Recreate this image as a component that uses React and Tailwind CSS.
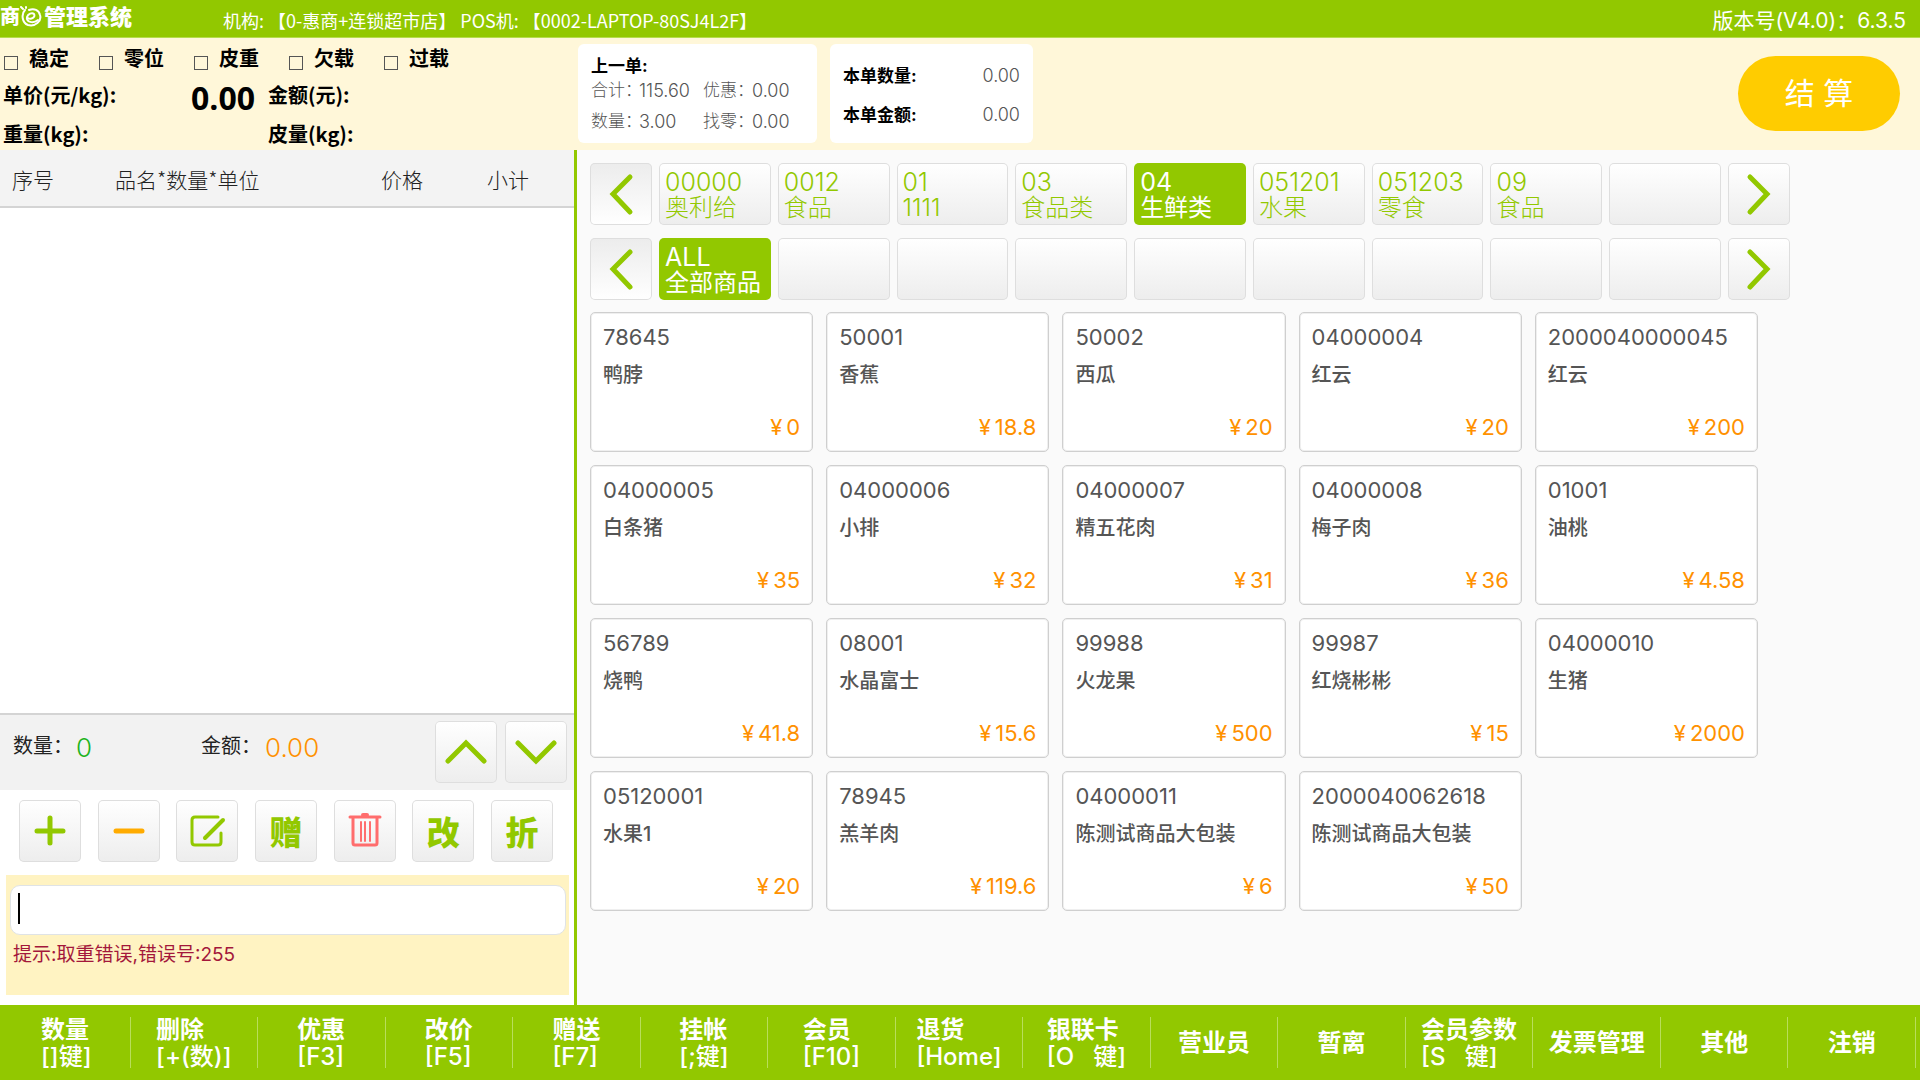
import React, { useState } from 'react'

const SCALE_FLAGS = ['稳定', '零位', '皮重', '欠载', '过载']

const CATEGORIES = [
  { code: '00000', name: '奥利给' },
  { code: '0012', name: '食品' },
  { code: '01', name: '1111' },
  { code: '03', name: '食品类' },
  { code: '04', name: '生鲜类' },
  { code: '051201', name: '水果' },
  { code: '051203', name: '零食' },
  { code: '09', name: '食品' },
  null,
]

const SUB_CATEGORIES = [{ code: 'ALL', name: '全部商品' }, null, null, null, null, null, null, null, null]

const PRODUCTS = [
  ['78645', '鸭脖', '0'],
  ['50001', '香蕉', '18.8'],
  ['50002', '西瓜', '20'],
  ['04000004', '红云', '20'],
  ['2000040000045', '红云', '200'],
  ['04000005', '白条猪', '35'],
  ['04000006', '小排', '32'],
  ['04000007', '精五花肉', '31'],
  ['04000008', '梅子肉', '36'],
  ['01001', '油桃', '4.58'],
  ['56789', '烧鸭', '41.8'],
  ['08001', '水晶富士', '15.6'],
  ['99988', '火龙果', '500'],
  ['99987', '红烧彬彬', '15'],
  ['04000010', '生猪', '2000'],
  ['05120001', '水果1', '20'],
  ['78945', '羔羊肉', '119.6'],
  ['04000011', '陈测试商品大包装', '6'],
  ['2000040062618', '陈测试商品大包装', '50'],
]

const FUNCTIONS = [
  ['数量', '[]键]'],
  ['删除', '[+(数)]'],
  ['优惠', '[F3]'],
  ['改价', '[F5]'],
  ['赠送', '[F7]'],
  ['挂帐', '[;键]'],
  ['会员', '[F10]'],
  ['退货', '[Home]'],
  ['银联卡', '[O   键]'],
  ['营业员'],
  ['暂离'],
  ['会员参数', '[S   键]'],
  ['发票管理'],
  ['其他'],
  ['注销'],
]

const CHEVRONS = {
  left: 'M40 14 L23 31 L40 49',
  right: 'M22 14 L39 31 L22 49',
  up: 'M13 40 L31 22 L49 40',
  down: 'M13 22 L31 40 L49 22',
}

function Chevron({ dir }) {
  return (
    <svg viewBox="0 0 62 62" className="size-full" fill="none" stroke="#92c800" strokeWidth="5" strokeLinecap="round">
      <path d={CHEVRONS[dir]} />
    </svg>
  )
}

function SquareButton({ label, children, dark = false }) {
  const fill = dark ? 'from-[#ececec] to-white' : 'from-white to-[#ededed]'
  return (
    <button
      type="button"
      aria-label={label}
      className={`flex size-[62px] shrink-0 items-center justify-center rounded-[5px] bg-linear-to-b shadow-[inset_0_0_0_1px_#dedede] ${fill}`}
    >
      {children}
    </button>
  )
}

function CategoryRow({ items, active, onPick }) {
  return (
    <div className="flex gap-[7px]">
      <SquareButton label="上一页" dark><Chevron dir="left" /></SquareButton>
      {items.map((item, i) => (
        <button
          key={i}
          type="button"
          onClick={() => item && onPick(i)}
          className={`h-[62px] min-w-0 flex-1 rounded-[5px] pt-[2px] pl-[6px] text-left leading-[25px] whitespace-nowrap ${
            i === active
              ? 'bg-[#92c800] font-normal text-white'
              : 'bg-linear-to-b from-white to-[#ededed] font-light text-[#92c800] shadow-[inset_0_0_0_1px_#dedede]'
          }`}
        >
          {item && (
            <>
              <span className="block text-[25px]">{item.code}</span>
              <span className="block text-[24px]">{item.name}</span>
            </>
          )}
        </button>
      ))}
      <SquareButton label="下一页"><Chevron dir="right" /></SquareButton>
    </div>
  )
}

function Logo() {
  return (
    <h1 className="flex w-[223px] items-center text-[22px] leading-[30px] font-black text-white">
      <span className="text-[20px]">商</span>
      <svg viewBox="0 0 22 22" className="size-[22px]" fill="none" stroke="#fff" strokeLinecap="round" aria-label="e">
        <path d="M8 12 C11 14 16 11 14 8 C12 6 8 8 7 11 C6 16 13 18 18 14" strokeWidth="2" />
        <path d="M5 4 C1 8 2 17 8 19 C15 21 22 15 20 9 C19 4 14 2 9 4" strokeWidth="2" />
        <path d="M1 1 L3 3 M6 1 L6 2" strokeWidth="2" />
      </svg>
      <span className="ml-[2px]">管理系统</span>
    </h1>
  )
}

function ScalePanel() {
  return (
    <div className="w-[578px] shrink-0 pt-[7px] font-['Noto_Sans_CJK_SC',sans-serif] text-[20px] font-bold text-black">
      <div className="flex pl-[4px]">
        {SCALE_FLAGS.map((flag) => (
          <label key={flag} className="flex w-[95px] leading-[26px]">
            <input type="checkbox" className="mt-[11px] mr-[11px] size-[14px] appearance-none border border-[#555]" />
            {flag}
          </label>
        ))}
      </div>
      <div className="grid grid-cols-[268px_1fr] pt-[4px] leading-[40px]">
        <div className="flex justify-between pr-[13px] pl-[3px]">
          <span>单价(元/kg):</span>
          <span className="font-['Open_Sans',sans-serif] text-[32px] leading-[46px]">0.00</span>
        </div>
        <span>金额(元):</span>
        <span className="-mt-[7px] pl-[3px]">重量(kg):</span>
        <span className="-mt-[7px]">皮量(kg):</span>
      </div>
    </div>
  )
}

function OrderSummary() {
  return (
    <>
      <section className="mt-[6px] h-[99px] w-[239px] rounded-md bg-white pt-[9px] pl-[13px] text-[17px] font-light text-[#555]">
        <h2 className="leading-[26px] font-bold text-black">上一单:</h2>
        <div className="grid grid-cols-[48px_64px_49px_1fr] leading-[31px] whitespace-nowrap">
          <span className="-mt-[4px]">合计：</span>
          <span className="-mt-[4px] text-[18px]">115.60</span>
          <span className="-mt-[4px]">优惠：</span>
          <span className="-mt-[4px] text-[18px]">0.00</span>
          <span>数量：</span>
          <span className="text-[18px]">3.00</span>
          <span>找零：</span>
          <span className="text-[18px]">0.00</span>
        </div>
      </section>
      <section className="mt-[6px] ml-[13px] grid h-[99px] w-[203px] grid-cols-[1fr_auto] content-center gap-y-[9px] rounded-md bg-white px-[13px] pt-[3px] text-[17px] leading-[30px]">
        <span className="font-bold text-black">本单数量:</span>
        <span className="text-[18px] font-light text-[#555]">0.00</span>
        <span className="font-bold text-black">本单金额:</span>
        <span className="text-[18px] font-light text-[#555]">0.00</span>
      </section>
    </>
  )
}

function ActionButtons() {
  return (
    <div className="flex justify-between pt-[10px] pr-[21px] pl-[19px] font-['Noto_Sans_CJK_SC',sans-serif] text-[33px] leading-none font-black text-[#92c800]">
      <SquareButton label="增加">
        <svg viewBox="0 0 62 62" className="size-full" stroke="#92c800" strokeWidth="5" strokeLinecap="round">
          <path d="M31 18 V43 M18 31 H44" />
        </svg>
      </SquareButton>
      <SquareButton label="减少">
        <svg viewBox="0 0 62 62" className="size-full" stroke="#ffab00" strokeWidth="5" strokeLinecap="round">
          <path d="M18 31 H44" />
        </svg>
      </SquareButton>
      <SquareButton label="编辑">
        <svg viewBox="0 0 62 62" className="size-full" fill="none" stroke="#92c800" strokeWidth="3" strokeLinecap="round" strokeLinejoin="round">
          <path d="M42 17 H19 Q16 17 16 20 V42 Q16 45 19 45 H42 Q45 45 45 42 V33" />
          <path d="M29 38 L47 20" strokeWidth="4" />
        </svg>
      </SquareButton>
      <SquareButton>赠</SquareButton>
      <SquareButton label="删除">
        <svg viewBox="0 0 62 62" className="size-full" fill="none" stroke="#ff6d6d" strokeWidth="3" strokeLinecap="round" strokeLinejoin="round">
          <path d="M16 17 H46 M19 18 V43 Q19 45 21 45 H41 Q43 45 43 43 V18" />
          <path d="M29 15 H33" strokeWidth="4" />
          <path d="M27 22 V41 M31 22 V41 M36 22 V41" strokeWidth="2" />
        </svg>
      </SquareButton>
      <SquareButton>改</SquareButton>
      <SquareButton>折</SquareButton>
    </div>
  )
}

function CartPanel() {
  return (
    <aside className="flex w-[577px] shrink-0 flex-col border-r-[3px] border-[#92c800] bg-white">
      <div className="flex-1 border-b-2 border-[#d4d4d4]">
        <table className="w-full table-fixed text-left font-['Noto_Sans_CJK_SC',sans-serif] text-[21px] text-[#222]">
          <thead>
            <tr className="h-[57px] border-b-2 border-[#d4d4d4] bg-[#f3f3f3]">
              <th className="w-[115px] pt-[4px] pl-[12px] font-light">序号</th>
              <th className="w-[266px] pt-[4px] font-light">品名*数量*单位</th>
              <th className="w-[106px] pt-[4px] font-light">价格</th>
              <th className="pt-[4px] font-light">小计</th>
            </tr>
          </thead>
        </table>
      </div>
      <div className="flex h-[75px] bg-[#f2f2f2] pt-[6px] pr-[7px] pl-[13px] text-[20px] text-[#222]">
        <div className="flex w-[188px] leading-[50px]">
          <span className="w-[63px]">数量：</span>
          <span className="text-[26px] leading-[54px] font-light text-[#1eb41e]">0</span>
        </div>
        <div className="flex flex-1 leading-[50px]">
          <span className="w-[64px]">金额：</span>
          <span className="text-[26px] leading-[54px] font-light text-[#ff9100]">0.00</span>
        </div>
        <div className="flex gap-[8px]">
          <SquareButton label="向上"><Chevron dir="up" /></SquareButton>
          <SquareButton label="向下"><Chevron dir="down" /></SquareButton>
        </div>
      </div>
      <ActionButtons />
      <div className="mr-[5px] mt-[13px] mb-[10px] ml-[6px] h-[120px] bg-[#fff3c2] pt-[10px] pr-[3px] pl-[4px]">
        <div className="relative">
          <input
            type="text"
            aria-label="商品条码"
            className="block h-[50px] w-full rounded-[10px] border border-[#dfe3e6] bg-white px-[8px] text-[24px] outline-none"
          />
          <span className="absolute top-[8px] left-[8px] h-[31px] w-[2px] bg-black" />
        </div>
        <p className="pl-[3px] text-[19px] leading-[40px] text-[#a3173b]">提示:取重错误,错误号:255</p>
      </div>
    </aside>
  )
}

function ProductCard({ code, name, price }) {
  return (
    <button
      type="button"
      className="flex h-[140px] min-w-0 flex-col rounded-[5px] border border-[#cfcfcf] bg-white px-[12px] pt-[8px] text-left text-[#555] shadow-[inset_0_0_0_1px_#efefef]"
    >
      <span className="text-[22px] leading-[32px]">{code}</span>
      <span className="pt-[6px] text-[20px] leading-[32px] font-medium">{name}</span>
      <span className="flex gap-[4px] self-end pt-[20px] text-[22px] leading-[32px] text-[#ff9100]">
        <span>¥</span>
        <span>{price}</span>
      </span>
    </button>
  )
}

export default function App() {
  const [category, setCategory] = useState(4)
  const [subCategory, setSubCategory] = useState(0)

  return (
    <div className="flex min-h-screen flex-col bg-[#fafafa] font-['Inter','Noto_Sans_CJK_SC',sans-serif]">
      <header className="flex h-[38px] items-start border-b border-[#b5dc4d] bg-[#92c800] pt-[2px] text-white">
        <Logo />
        <p className="flex-1 font-['Noto_Sans_CJK_SC',sans-serif] text-[18px] leading-[36px] whitespace-pre">机构: 【0-惠商+连锁超市店】 POS机: 【0002-LAPTOP-80SJ4L2F】</p>
        <p className="pr-[14px] text-[21px] leading-[38px]">版本号(V4.0)：6.3.5</p>
      </header>

      <div className="flex h-[112px] bg-[#fff7d9]">
        <ScalePanel />
        <OrderSummary />
        <button
          type="button"
          className="mt-[18px] mr-[20px] ml-auto h-[75px] w-[162px] rounded-full bg-[#ffcc00] text-[30px] whitespace-pre text-white"
        >
          结 算
        </button>
      </div>

      <div className="flex flex-1">
        <CartPanel />
        <main className="min-w-0 flex-1 pt-[13px] pl-[13px]">
          <div className="flex flex-col gap-[13px] pr-[130px]">
            <CategoryRow items={CATEGORIES} active={category} onPick={setCategory} />
            <CategoryRow items={SUB_CATEGORIES} active={subCategory} onPick={setSubCategory} />
          </div>
          <div className="grid grid-cols-5 gap-[13px] pt-[12px] pr-[162px]">
            {PRODUCTS.map(([code, name, price]) => (
              <ProductCard key={code} code={code} name={name} price={price} />
            ))}
          </div>
        </main>
      </div>

      <nav className="flex h-[75px] bg-[#92c800] pr-[4px] pl-[3px]">
        {FUNCTIONS.map(([name, hotkey]) => (
          <button
            key={name}
            type="button"
            className="my-[12px] flex flex-1 items-center justify-center border-r border-[#b9de5a] text-left text-[24px] leading-[27px] font-medium whitespace-pre text-white"
          >
            <span>
              <span className="block font-bold">{name}</span>
              {hotkey && <span className="block">{hotkey}</span>}
            </span>
          </button>
        ))}
      </nav>
    </div>
  )
}
